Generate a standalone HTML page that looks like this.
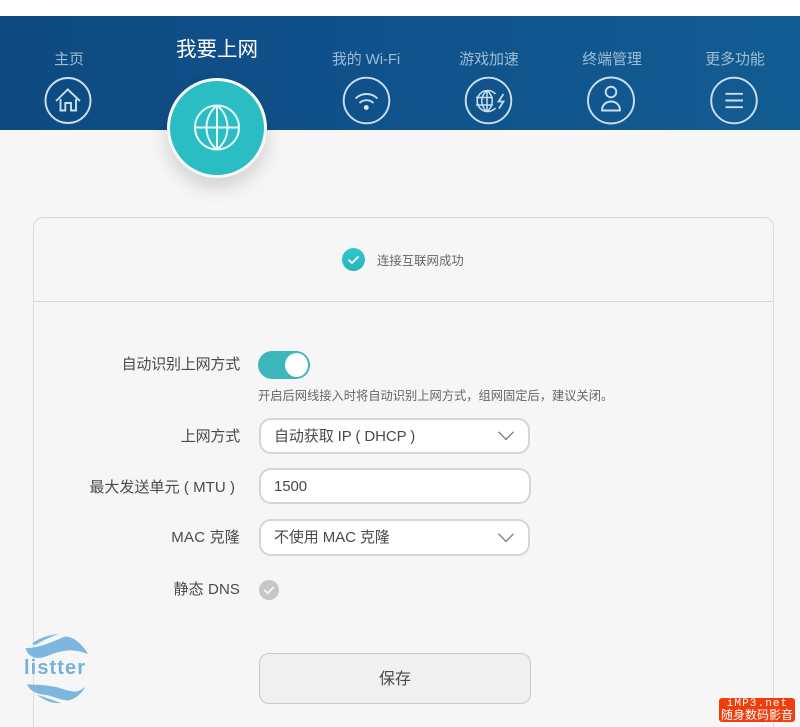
<!DOCTYPE html>
<html lang="zh">
<head>
<meta charset="utf-8">
<style>
html,body{margin:0;padding:0;background:#f6f6f7;width:800px;height:727px;overflow:hidden}
#p{width:800px;height:727px;overflow:hidden;position:relative;font-family:"Liberation Sans","Noto Sans CJK SC",sans-serif;color:#4a4a4a}
.a{position:absolute;white-space:nowrap}
.top{left:0;top:0;width:800px;height:16px;background:#fff}
.hdr{left:0;top:16px;width:800px;height:114px;background:linear-gradient(90deg,#0e4a80 0%,#10508a 40%,#125c91 100%)}
.nav{font-size:15px;line-height:20px;color:#9dbdd8;text-align:center;width:120px;top:50px;letter-spacing:-.1px}
svg{position:absolute;overflow:visible}
.lb{font-size:15px;line-height:20px;color:#4a4a4a;text-align:right;right:560px;letter-spacing:-.2px}
.field{left:259px;width:267px;border:2px solid #d6d6d6;border-radius:12px;background:#fff;font-size:15px;color:#4a4a4a;text-indent:13px;letter-spacing:-.1px}
</style>
</head>
<body>
<div id="p">
<div class="a top"></div>
<div class="a hdr"></div>

<div class="a nav" style="left:9px">主页</div>
<div class="a" style="left:117px;top:37px;width:200px;text-align:center;font-size:20.5px;line-height:26px;color:#fff">我要上网</div>
<div class="a nav" style="left:306px">我的 Wi-Fi</div>
<div class="a nav" style="left:429px">游戏加速</div>
<div class="a nav" style="left:552px">终端管理</div>
<div class="a nav" style="left:675px">更多功能</div>

<svg style="left:0;top:0" width="800" height="200" fill="none" stroke="#c9dfF0" stroke-width="1.900">
  <circle cx="68" cy="100.500" r="22.500"/>
  <path d="M56 101 L67.800 89.500 L80 101 M60.500 99 V110.500 H65.300 V103 H71 V110.500 H76 V99"/>
  <circle cx="366.500" cy="100.500" r="22.800"/>
  <path d="M355.500 98.500 C361.500 92.500 371.500 92.500 377.500 98.500 M359.500 103 C363.500 99.300 369.500 99.300 373.500 103"/>
  <circle cx="366.300" cy="107.500" r="2.400" fill="#dcebf6" stroke="none"/>
  <circle cx="488.500" cy="100.500" r="22.800"/>
  <path d="M495.500 94 A10.500 10.500 0 1 0 495.500 108" stroke-width="1.600"/>
  <path d="M476 97.500 H493 M476 105 H493 M487 90.500 V111.500 M487 90.500 C480 96 480 106 487 111.500 M487 90.500 C494 96 494 106 487 111.500" stroke-width="1.500"/>
  <path d="M503.500 94 L498.500 101.500 H503.500 L499 108.500" stroke-width="1.700"/>
  <circle cx="611" cy="100.500" r="23"/>
  <circle cx="611" cy="92" r="5.300"/>
  <path d="M602 110.500 C602 98.500 620 98.500 620 110.500 Z" stroke-linejoin="round"/>
  <circle cx="734" cy="100.500" r="22.800"/>
  <path d="M725.500 93.800 H743 M725.500 100.500 H743 M725.500 107.200 H743"/>
</svg>

<!-- active button -->
<div class="a" style="left:167px;top:78px;width:100px;height:100px;border-radius:50%;background:#2abdc3;border:3px solid #f8fafa;box-sizing:border-box;box-shadow:0 10px 18px rgba(0,0,0,.15)"></div>
<svg style="left:0;top:0" width="800" height="200" fill="none" stroke="#e6f7f8" stroke-width="2">
  <circle cx="217" cy="127.500" r="22"/>
  <path d="M195 127.500 H239 M217 105.500 V149.500 M217 105.500 C203 116 203 139 217 149.500 M217 105.500 C231 116 231 139 217 149.500"/>
</svg>

<!-- card -->
<div class="a" style="left:33px;top:217px;width:741px;height:540px;border:1px solid #dcdcdc;border-radius:10px;box-sizing:border-box"></div>
<div class="a" style="left:33px;top:301px;width:740px;height:1px;background:#d6d6d6"></div>

<div class="a" style="left:342px;top:248px;width:23px;height:23px;border-radius:50%;background:linear-gradient(180deg,#32c6d0,#26b5be)"></div>
<svg style="left:342px;top:248px" width="23" height="23" fill="none" stroke="#fff" stroke-width="1.800"><path d="M6.500 11.800 L10 15 L16.500 8.500"/></svg>
<div class="a" style="left:377px;top:253px;font-size:12.4px;line-height:17px;color:#666">连接互联网成功</div>

<!-- row 1 -->
<div class="a lb" style="top:355px">自动识别上网方式</div>
<div class="a" style="left:258px;top:351px;width:52px;height:28px;border-radius:14px;background:#3cb6ba"></div>
<div class="a" style="left:285px;top:353px;width:23px;height:24px;border-radius:50%;background:#fff"></div>
<div class="a" style="left:258px;top:388px;font-size:12.25px;line-height:17px;color:#666">开启后网线接入时将自动识别上网方式，组网固定后，建议关闭。</div>

<!-- row 2 -->
<div class="a lb" style="top:427px">上网方式</div>
<div class="a field" style="top:418px;height:32px;line-height:33px">自动获取 IP ( DHCP )</div>
<svg style="left:498px;top:431px" width="16" height="10" fill="none" stroke="#7a7a7a" stroke-width="1.300"><path d="M0.500 0.800 L8 8.500 L15.500 0.800"/></svg>

<!-- row 3 -->
<div class="a lb" style="top:478px;right:565px;letter-spacing:.05px">最大发送单元 ( MTU )</div>
<div class="a field" style="top:468px;width:268px;height:32px;line-height:34px">1500</div>

<!-- row 4 -->
<div class="a lb" style="top:528px;letter-spacing:.2px">MAC 克隆</div>
<div class="a field" style="top:519px;height:33px;line-height:34px">不使用 MAC 克隆</div>
<svg style="left:498px;top:533px" width="16" height="10" fill="none" stroke="#7a7a7a" stroke-width="1.300"><path d="M0.500 0.800 L8 8.500 L15.500 0.800"/></svg>

<!-- row 5 -->
<div class="a lb" style="top:580px;letter-spacing:.1px">静态 DNS</div>
<div class="a" style="left:259px;top:580px;width:20px;height:20px;border-radius:50%;background:#c6c6c6"></div>
<svg style="left:259px;top:580px" width="20" height="20" fill="none" stroke="#f2f2f2" stroke-width="2"><path d="M5.200 10 L8.800 13.200 L14.800 7"/></svg>

<!-- save -->
<div class="a" style="left:259px;top:653px;width:272px;height:51px;border:1.500px solid #c9c9c9;border-radius:10px;background:#f0f0f0;box-sizing:border-box;text-align:center;font-size:16px;line-height:51px;color:#4a4a4a">保存</div>

<!-- watermark -->
<svg style="left:0;top:0" width="100" height="727" fill="#7db7df" stroke="none">
  <path d="M32 643.500 C39 638 49 635 59 633.800 C50 637 42 641 35 645 Z"/>
  <path d="M25.500 648 C38 648.500 52 642 65 636.500 C74 636.500 83 645 88 654 C80 651 72 649.500 64 651 C54 652 46 658 38 658 C32 658 27 654 25.500 648 Z"/>
  <path d="M27 684.500 C38 684.500 50 685.500 58 687.500 C66 690 72 692 76 691.500 C79 691 83 689 85.500 686.500 C82 693 76 699 68 700.500 C60 700 52 696 46 695 C38 694 31 692.500 27 684.500 Z"/>
  <path d="M37 695 C45 697 52 700 61 703 C52 704 44 700 37 695 Z"/>
</svg>
<div class="a" style="left:24px;top:656px;font-weight:bold;font-size:20px;line-height:24px;letter-spacing:1.100px;color:#78b1d8">listter</div>

<!-- badge -->
<div class="a" style="left:719px;top:698px;width:76px;height:24px;background:#f13d0c;border-radius:3px;color:#fff;text-align:center">
  <div style="font-family:'Liberation Mono',monospace;font-size:11px;line-height:10px;letter-spacing:1.100px;margin-top:.500px;text-indent:1px">iMP3.net</div>
  <div style="font-size:12px;line-height:13px">随身数码影音</div>
</div>
</div>
</body>
</html>
